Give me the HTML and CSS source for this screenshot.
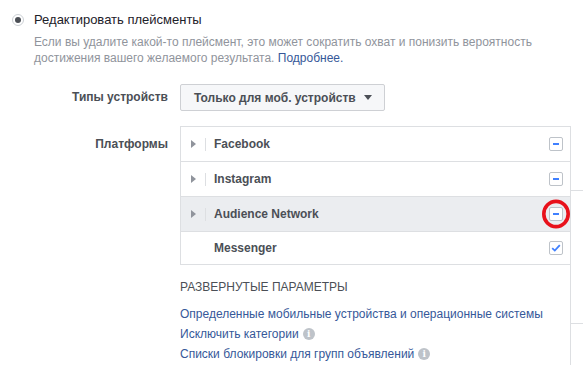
FILE: index.html
```html
<!DOCTYPE html>
<html lang="ru">
<head>
<meta charset="utf-8">
<link rel="stylesheet" href="styles.css">
</head>
<body>
<div class="page">
  <div class="head">
    <span class="radio"><span class="dot"></span></span>
    <span class="title">Редактировать плейсменты</span>
  </div>
  <p class="desc">Если вы удалите какой-то плейсмент, это может сократить охват и понизить вероятность достижения вашего желаемого результата. <a class="link">Подробнее.</a></p>

  <div class="form">
    <div class="label lbl-device">Типы устройств</div>
    <div class="field">
      <button class="select">Только для моб. устройств <span class="caret"></span></button>
    </div>

    <div class="label lbl-platform">Платформы</div>
    <div class="field">
      <div class="platforms">
        <div class="prow">
          <span class="tri"></span><span class="vsep"></span>
          <span class="pname">Facebook</span>
          <span class="cb"><span class="minus"></span></span>
        </div>
        <div class="prow">
          <span class="tri"></span><span class="vsep"></span>
          <span class="pname">Instagram</span>
          <span class="cb"><span class="minus"></span></span>
        </div>
        <div class="prow hl">
          <span class="tri"></span><span class="vsep"></span>
          <span class="pname">Audience Network</span>
          <span class="cb marked"><span class="minus"></span>
            <svg class="ring" width="32" height="32" viewBox="0 0 32 32"><ellipse cx="16" cy="16" rx="12.2" ry="12.6" fill="none" stroke="#e8111b" stroke-width="3.6"/></svg>
          </span>
        </div>
        <div class="prow last">
          <span class="tri-space"></span>
          <span class="pname">Messenger</span>
          <span class="cb"><svg width="10" height="8" viewBox="0 0 10 8"><path d="M1.2 4.2 L3.8 6.6 L8.8 1.2" fill="none" stroke="#4080ff" stroke-width="1.8"/></svg></span>
        </div>
      </div>

      <div class="adv-title">РАЗВЕРНУТЫЕ ПАРАМЕТРЫ</div>
      <ul class="adv">
        <li><a class="link">Определенные мобильные устройства и операционные системы</a></li>
        <li><a class="link">Исключить категории</a> <span class="info">i</span></li>
        <li><a class="link">Списки блокировки для групп объявлений</a> <span class="info">i</span></li>
      </ul>
    </div>
  </div>

  <div class="side-panel">
    <div class="side-b"></div>
  </div>
</div>
</body>
</html>
```
FILE: styles.css
```css
* { box-sizing: border-box; }
html, body { margin: 0; padding: 0; background: #fff; }
body {
  font-family: "Liberation Sans", Arial, sans-serif;
  font-size: 12px;
  color: #1d2129;
  width: 583px;
  height: 365px;
  overflow: hidden;
}
.page { position: relative; height: 365px; }

.head {
  display: flex;
  align-items: center;
  padding: 9px 0 0 12px;
  height: 22px;
  box-sizing: content-box;
}
.radio {
  width: 12px; height: 12px;
  border: 1px solid #ccd0d5;
  border-radius: 50%;
  display: flex; align-items: center; justify-content: center;
  margin-right: 10px;
}
.dot { width: 6px; height: 6px; border-radius: 50%; background: #4b4f56; }
.title { font-size: 13px; color: #1d2129; line-height: 16px; }

.desc {
  margin: 3px 0 0 34px;
  width: 520px;
  color: #90949c;
  line-height: 16px;
}
.link { color: #365899; text-decoration: none; }

.form {
  display: grid;
  grid-template-columns: 168px 1fr;
  column-gap: 12px;
  row-gap: 15px;
  margin-top: 18px;
}
.label {
  text-align: right;
  font-weight: bold;
  color: #4b4f56;
}
.lbl-device { line-height: 27px; }
.lbl-platform { padding-top: 11px; }

.select {
  height: 27px;
  width: 205px;
  padding: 0 12px 0 13px;
  border: 1px solid #ced0d4;
  border-radius: 2px;
  background: #f6f7f9;
  font-family: "Liberation Sans", Arial, sans-serif;
  font-size: 12px;
  font-weight: bold;
  color: #4b4f56;
  display: flex;
  align-items: center;
  justify-content: space-between;
}
.caret {
  width: 0; height: 0;
  border-left: 4.5px solid transparent;
  border-right: 4.5px solid transparent;
  border-top: 5px solid #4b4f56;
}

.platforms {
  width: 391px;
  border: 1px solid #dddfe2;
}
.prow {
  height: 35px;
  display: flex;
  align-items: center;
  border-bottom: 1px solid #dddfe2;
  padding: 0 7px 0 10px;
}
.prow.last { border-bottom: none; height: 32px; }
.prow.hl { background: #ebedf0; }
.tri {
  width: 0; height: 0;
  border-top: 4px solid transparent;
  border-bottom: 4px solid transparent;
  border-left: 5px solid #90949c;
}
.vsep {
  width: 1px; height: 13px;
  background: #dddfe2;
  margin: 0 8px 0 9px;
}
.tri-space { width: 23px; }
.pname {
  flex: 1;
  font-weight: bold;
  color: #4b4f56;
}
.cb {
  position: relative;
  width: 14px; height: 14px;
  border: 1px solid #bec3c9;
  border-radius: 2px;
  background: #fff;
  display: flex; align-items: center; justify-content: center;
}
.minus { width: 6px; height: 2px; background: #4080ff; }
.ring { position: absolute; left: -10px; top: -10px; }

.adv-title {
  margin-top: 15px;
  color: #4b4f56;
  line-height: 14px;
}
.adv {
  list-style: none;
  margin: 10px 0 0;
  padding: 0;
}
.adv li { height: 20px; line-height: 16px; display: flex; align-items: center; gap: 4px; }
.info {
  display: inline-flex;
  width: 12px; height: 12px;
  border-radius: 50%;
  background: #bec3c9;
  color: #fff;
  font-size: 9px;
  font-weight: bold;
  font-family: "DejaVu Serif", serif;
  align-items: center;
  justify-content: center;
}

.side-panel {
  position: absolute;
  left: 570px;
  top: 190px;
  width: 13px;
  height: 175px;
  border-left: 1px solid #dddfe2;
  border-top: 1px solid #dddfe2;
}
.side-b {
  position: absolute;
  left: 0; right: 0;
  top: 132px;
  border-top: 1px solid #dddfe2;
}
```
